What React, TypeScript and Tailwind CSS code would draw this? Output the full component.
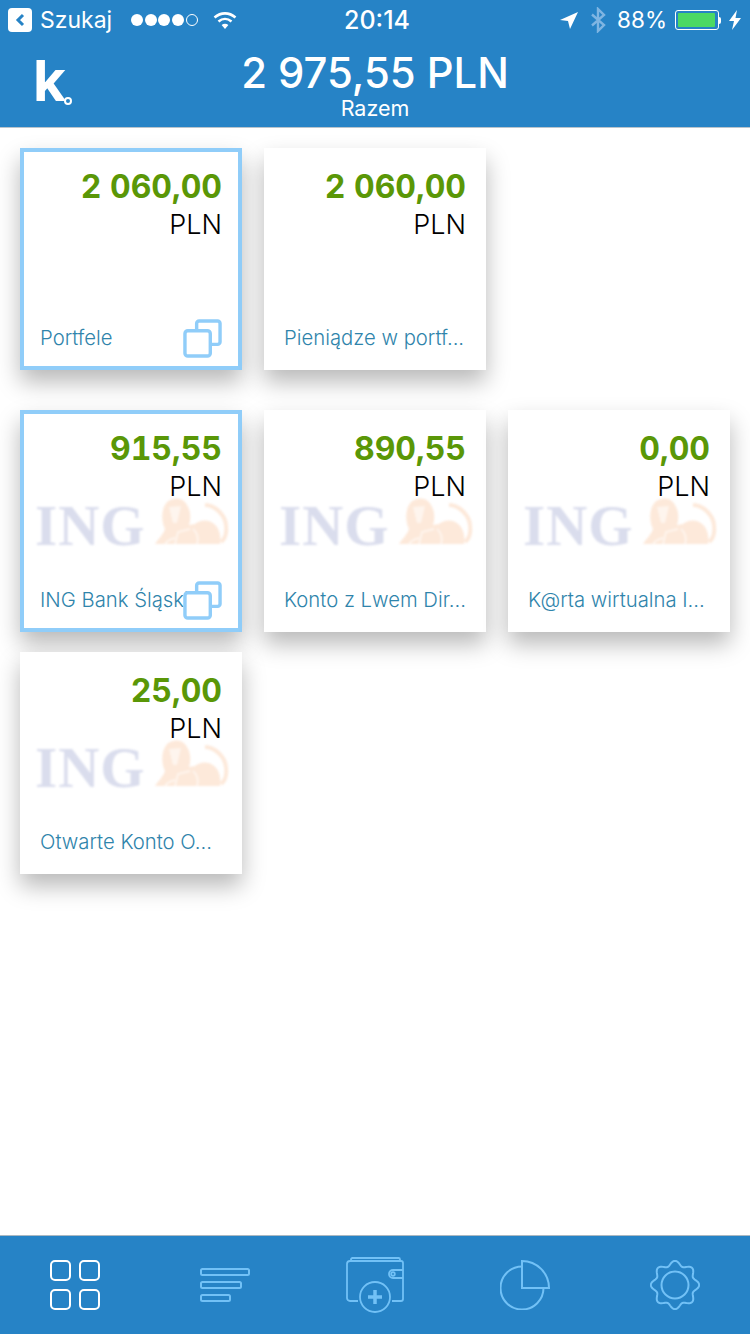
const sans = "font-['Inter','Liberation_Sans',sans-serif]";

// gear outline: 8 rounded teeth around the ring
const gearPath =
  Array.from({ length: 160 }, (_, i) => {
    const t = (i / 160) * Math.PI * 2;
    const r = 21.8 + 2.4 * Math.cos(8 * t);
    const x = 25 + r * Math.sin(t);
    const y = 25 - r * Math.cos(t);
    return `${i === 0 ? "M" : "L"}${x.toFixed(2)} ${y.toFixed(2)}`;
  }).join(" ") + "z";

function StatusBar() {
  return (
    <div className="grid h-10 grid-cols-3 items-center text-[24px] leading-none text-white">
      <div className="flex items-center pl-2">
        <div className="flex h-6 w-6 items-center justify-center rounded-[4px] bg-white">
          <svg width="12" height="14" viewBox="0 0 12 14" fill="none" stroke="#2683c6" strokeWidth="3">
            <path d="M9 2 4 7l5 5" />
          </svg>
        </div>
        <span className="ml-2 text-[23px]">Szukaj</span>
        <div className="ml-[19px] flex gap-[1.6px]">
          <span className="h-3 w-3 rounded-full bg-white" />
          <span className="h-3 w-3 rounded-full bg-white" />
          <span className="h-3 w-3 rounded-full bg-white" />
          <span className="h-3 w-3 rounded-full bg-white" />
          <span className="h-3 w-3 rounded-full border border-white" />
        </div>
        <svg className="ml-[15px]" width="24" height="18" viewBox="0 0 24 18" fill="none" stroke="white" strokeWidth="2.6">
          <path d="M1.5 6.5C8 1 16 1 22.5 6.5" />
          <path d="M5.5 10.5c4-3.4 9-3.4 13 0" />
          <path d="M12 18 8.6 14c2-1.600 4.800-1.600 6.800 0z" fill="white" stroke="none" />
        </svg>
      </div>
      <div className="pl-1 text-center text-[25px] font-medium">20:14</div>
      <div className="flex items-center justify-end pr-[9px]">
        <svg width="18" height="18" viewBox="0 0 18 18" fill="white">
          <path d="M18 1 0 9l8 1 2 8z" />
        </svg>
        <svg className="ml-3" width="16" height="26" viewBox="0 0 16 26" fill="none" stroke="#7fb5e2" strokeWidth="2.4">
          <path d="M2 7.500 14 18l-6 6V2l6 6L2 18.500" />
        </svg>
        <span className="ml-[11px] text-[22.500px]">88%</span>
        <div className="ml-2 flex items-center">
          <div className="h-[20px] w-[44px] rounded-[3px] border border-white p-[2px]">
            <div className="h-full w-[37px] rounded-[1px] bg-[#4cd964]" />
          </div>
          <div className="h-[7px] w-[2px] rounded-r-sm bg-white" />
        </div>
        <svg className="ml-[8px]" width="12" height="20" viewBox="0 0 12 20" fill="white">
          <path d="M8 0 0 11h5l-2 9 9-12H6.500z" />
        </svg>
      </div>
    </div>
  );
}

function Header() {
  return (
    <header className="border-b border-[#b9c4cc] bg-[#2683c6] text-white">
      <StatusBar />
      <div className="grid h-[87px] grid-cols-[1fr_auto_1fr] items-start">
        <div className="flex items-start pl-[33px] pt-[7px]">
          <span className="text-[57px] leading-[68px] font-bold">k</span>
          <span className="mt-[50px] ml-[-2px] h-2 w-2 rounded-full border-2 border-white" />
        </div>
        <div className="pt-[10px] text-center">
          <div className="text-[41.800px] leading-[46px] font-medium">2 975,55 PLN</div>
          <div className="mt-[1px] text-[21.500px] leading-[22px]">Razem</div>
        </div>
      </div>
    </header>
  );
}

function CopyIcon() {
  return (
    <svg className="absolute right-[20px] bottom-[12px]" width="39" height="39" viewBox="0 0 40 40" fill="none" stroke="#90cdf9" strokeWidth="3.500">
      <path d="M14 12V4.500a2.500 2.500 0 0 1 2.500-2.500h19a2.500 2.500 0 0 1 2.500 2.500v19a2.500 2.500 0 0 1-2.500 2.500H28" />
      <rect x="2" y="12" width="26" height="26" rx="3" fill="white" />
    </svg>
  );
}

function IngLogo() {
  return (
    <div className="pointer-events-none absolute left-[15px] top-[87px] flex items-end blur-[1px]">
      <span className="font-['Liberation_Serif',serif] text-[57px] leading-[42px] font-bold tracking-[1px] text-[#dadded]">
        ING
      </span>
      <svg className="ml-[9px]" width="74" height="50" viewBox="0 0 74 50" fill="#fde9da">
        <path d="M0 47c3-5 8-9 10-15C6 24 6 12 12 5c6-5 16-5 20 3 4 6 4 14 2 20l6-1c6-5 16-5 22 3 3 5 4 10 3 17z" />
        <path d="M50 8c10 0 20 10 21 20 1 8-1 14-5 17" fill="none" stroke="#fde9da" strokeWidth="4" />
        <path d="M14 10l12-1-4 17h-4z" fill="#fef5ee" />
        <path d="M20 47l3-12 12-3M42 47c2-6 0-12-4-15M10 47c2-3 6-5 10-6" fill="none" stroke="#fef5ee" strokeWidth="2" />
      </svg>
    </div>
  );
}

type CardProps = {
  amount: string;
  label: string;
  selected?: boolean;
  ing?: boolean;
};

function Card({ amount, label, selected, ing }: CardProps) {
  return (
    <div
      className={`relative h-[222px] w-[222px] bg-white shadow-[0_12px_22px_rgba(0,0,0,0.28)] ${
        selected ? "outline-4 -outline-offset-4 outline-[#90cdf9]" : ""
      }`}
    >
      {ing && <IngLogo />}
      <div className="relative flex h-full flex-col px-5 pt-5">
        <div className="text-right text-[32px] leading-[38px] font-bold tabular-nums text-[#5a9707]">{amount}</div>
        <div className="text-right text-[27px] leading-[37px] font-light text-black">PLN</div>
        <div className="mt-auto mb-5 whitespace-nowrap text-[20.300px] leading-[24px] font-[350] text-[#2f84ab]">{label}</div>
      </div>
      {selected && <CopyIcon />}
    </div>
  );
}

function IconGrid() {
  return (
    <div className="grid h-[50px] w-[50px] grid-cols-2 gap-2">
      <span className="rounded-[5px] border-2 border-white" />
      <span className="rounded-[5px] border-2 border-white" />
      <span className="rounded-[5px] border-2 border-white" />
      <span className="rounded-[5px] border-2 border-white" />
    </div>
  );
}

function TabBar() {
  return (
    <nav className="grid h-[99px] grid-cols-5 place-items-center border-t border-[#aab8c2] bg-[#2683c6]">
      <IconGrid />
      <svg width="50" height="34" viewBox="0 0 50 34" fill="none" stroke="#72c1f6" strokeWidth="2">
        <rect x="1" y="1" width="48" height="6" rx="1.500" />
        <rect x="1" y="14" width="40" height="6" rx="1.500" />
        <rect x="1" y="27" width="29" height="6" rx="1.500" />
      </svg>
      <svg width="58" height="56" viewBox="0 0 58 56" fill="none" stroke="#72c1f6" strokeWidth="1.800">
        <path d="M5 4V2.500A1.500 1.500 0 0 1 6.500 1h46A1.500 1.500 0 0 1 54 2.500V4" />
        <path d="M12 44H4a3 3 0 0 1-3-3V7a3 3 0 0 1 3-3h51a2 2 0 0 1 2 2v36a2 2 0 0 1-2 2h-9" />
        <path d="M57 13H47a4 4 0 0 0 0 8h10" />
        <circle cx="47" cy="17" r="1.800" />
        <circle cx="29" cy="40" r="15" />
        <path d="M29 33v14M22 40h14" strokeWidth="3.500" />
      </svg>
      <svg width="50" height="50" viewBox="0 0 50 50" fill="none" stroke="#72c1f6" strokeWidth="2">
        <path d="M22 6.500A21.500 21.500 0 1 0 43.500 28" />
        <path d="M22 1v27h27A27 27 0 0 0 22 1z" />
      </svg>
      <svg width="50" height="50" viewBox="0 0 50 50" fill="none" stroke="#72c1f6" strokeWidth="2">
        <path d={gearPath} />
        <circle cx="25" cy="25" r="13.500" />
      </svg>
    </nav>
  );
}

export default function App() {
  return (
    <div className={`flex h-[1334px] w-[750px] flex-col overflow-hidden bg-white ${sans}`}>
      <Header />
      <main className="flex flex-1 flex-col px-5 pt-5">
        <div className="flex gap-[22px]">
          <Card amount="2 060,00" label="Portfele" selected />
          <Card amount="2 060,00" label="Pieniądze w portf..." />
        </div>
        <div className="mt-10 flex gap-[22px]">
          <Card amount="915,55" label="ING Bank Śląski" selected ing />
          <Card amount="890,55" label="Konto z Lwem Dir..." ing />
          <Card amount="0,00" label="K@rta wirtualna I..." ing />
        </div>
        <div className="mt-5 flex gap-[22px]">
          <Card amount="25,00" label="Otwarte Konto O..." ing />
        </div>
      </main>
      <TabBar />
    </div>
  );
}
